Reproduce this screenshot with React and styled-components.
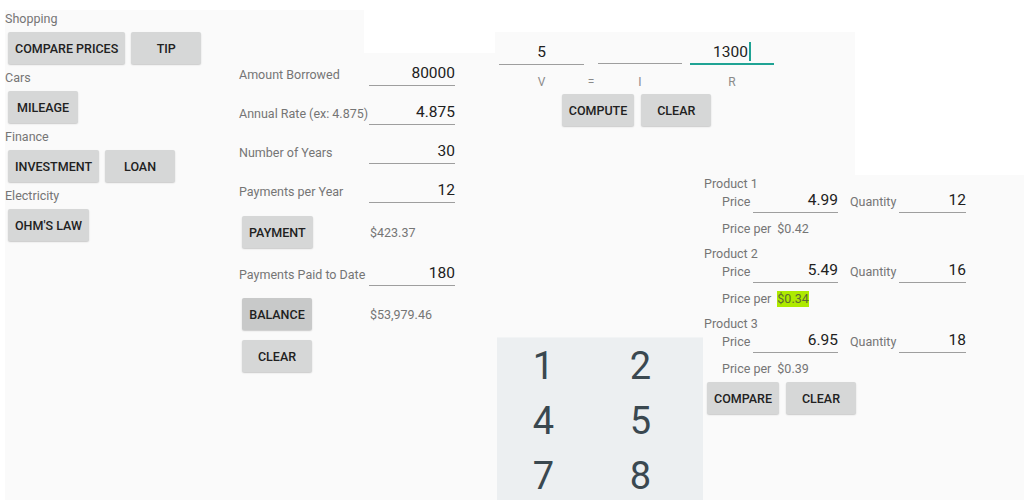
import React from "react";
import styled, { createGlobalStyle } from "styled-components";

const Global = createGlobalStyle`
  html, body { margin: 0; padding: 0; background: #ffffff; }
  body { font-family: Roboto, "Liberation Sans", sans-serif; }
  * { box-sizing: border-box; }
`;

const Desktop = styled.div`
  position: relative;
  width: 1024px;
  height: 500px;
  overflow: hidden;
  background: #ffffff;
`;

const Screen = styled.section`
  position: absolute;
  left: ${(p) => p.$x}px;
  top: ${(p) => p.$y}px;
  width: ${(p) => p.$w}px;
  height: ${(p) => p.$h}px;
  background: #fafafa;
  display: flex;
  flex-direction: column;
  padding: ${(p) => p.$pad || "0"};
`;

const Button = styled.button`
  justify-self: start;
  height: 32px;
  min-width: 70px;
  padding: 0 7px;
  margin: 0;
  border: none;
  border-radius: 2px;
  background: ${(p) => (p.$pressed ? "#c8c9c9" : "#d6d7d7")};
  box-shadow: 0 1px 1.5px rgba(0, 0, 0, 0.2);
  font-family: Roboto, "Liberation Sans", sans-serif;
  font-weight: 500;
  font-size: 12.5px;
  color: #212121;
  text-transform: uppercase;
  white-space: nowrap;
`;

/* ---------- Home menu ---------- */
const Menu = styled.div`
  display: flex;
  flex-direction: column;
  padding-top: 1px;
`;

const SectionLabel = styled.div`
  font-size: 12.5px;
  line-height: 16px;
  color: #757575;
`;

const ButtonRow = styled.div`
  display: flex;
  gap: ${(p) => p.$gap || 6}px;
  margin: ${(p) => p.$m || "0"};
  width: ${(p) => (p.$w ? `${p.$w}px` : "auto")};
  justify-content: ${(p) => p.$justify || "flex-start"};
`;

/* ---------- Loan ---------- */
const FormRow = styled.div`
  display: grid;
  grid-template-columns: 130px 86px;
  align-items: end;
  margin-top: ${(p) => p.$mt || 0}px;
`;

const FieldLabel = styled.span`
  font-size: 12.5px;
  line-height: 16px;
  color: #757575;
  padding-bottom: 3px;
  white-space: nowrap;
`;

const Field = styled.div`
  width: ${(p) => p.$w || 86}px;
  font-size: 15.5px;
  line-height: ${(p) => p.$lh || 20}px;
  padding-bottom: ${(p) => p.$pb || 2}px;
  color: #212121;
  text-align: ${(p) => p.$align || "right"};
  border-bottom: ${(p) => (p.$focused ? "2px solid #1fa394" : "1px solid #9e9e9e")};
  min-height: ${(p) => (p.$lh || 20) + (p.$pb || 2)}px;
  white-space: nowrap;
`;

const Cursor = styled.span`
  display: inline-block;
  width: 2px;
  height: 19px;
  margin-left: 1px;
  background: #1fa394;
  vertical-align: -4px;
`;

const ResultRow = styled.div`
  display: grid;
  grid-template-columns: 128px auto;
  align-items: center;
  margin-top: ${(p) => p.$mt || 0}px;
  padding-left: 3px;
`;

const ResultText = styled.span`
  font-size: 12.5px;
  color: #757575;
`;

const FormStack = styled.div`
  display: flex;
  flex-direction: column;
  gap: 16px;
`;

/* ---------- Ohm's law ---------- */
const OhmGrid = styled.div`
  display: grid;
  grid-template-columns: 85px 14px 84px 8px 84px;
  row-gap: 10px;
  align-items: start;
  width: 275px;
`;

const OhmLabel = styled.span`
  font-size: 12px;
  line-height: 14px;
  color: #8a8a8a;
  text-align: center;
`;

const Keypad = styled.div`
  margin-top: auto;
  margin-left: -2px;
  height: 163px;
  background: #eceff1;
  border-top: 1px solid #f2f4f5;
  display: grid;
  grid-template-columns: 93px 101px;
  grid-auto-rows: 55px;
  padding-top: 1px;
`;

const Key = styled.div`
  font-size: 38px;
  line-height: 55px;
  text-align: center;
  color: #3a4850;
`;

/* ---------- Compare prices ---------- */
const ProductLabel = styled.div`
  font-size: 12.5px;
  line-height: 14px;
  color: #757575;
  margin-top: ${(p) => p.$mt || 0}px;
`;

const PriceRow = styled.div`
  display: grid;
  grid-template-columns: 31px 85px 12px 49px 67px;
  align-items: end;
  padding-left: 18px;
`;

const SmallLabel = styled.span`
  font-size: 12.5px;
  line-height: 16px;
  color: #757575;
  padding-bottom: 3px;
  white-space: nowrap;
`;

const PerRow = styled.div`
  display: flex;
  gap: 6px;
  padding-left: 18px;
  margin-top: 8px;
  font-size: 12.5px;
  line-height: 16px;
  color: #757575;
`;

const PerValue = styled.span`
  background: ${(p) => (p.$best ? "#aeea00" : "transparent")};
  color: ${(p) => (p.$best ? "#5d6b33" : "#757575")};
`;

const menu = [
  { label: "Shopping", buttons: ["Compare Prices", "Tip"] },
  { label: "Cars", buttons: ["Mileage"] },
  { label: "Finance", buttons: ["Investment", "Loan"] },
  { label: "Electricity", buttons: ["Ohm's Law"] },
];

const loanRows = [
  ["Amount Borrowed", "80000"],
  ["Annual Rate (ex: 4.875)", "4.875"],
  ["Number of Years", "30"],
  ["Payments per Year", "12"],
];

const products = [
  { name: "Product 1", price: "4.99", qty: "12", per: "$0.42" },
  { name: "Product 2", price: "5.49", qty: "16", per: "$0.34", best: true },
  { name: "Product 3", price: "6.95", qty: "18", per: "$0.39" },
];

const keys = ["1", "2", "4", "5", "7", "8"];

export default function App() {
  return (
    <>
      <Global />
      <Desktop>
        {/* Home menu */}
        <Screen $x={5} $y={10} $w={359} $h={490}>
          <Menu>
            {menu.map((g) => (
              <div key={g.label}>
                <SectionLabel>{g.label}</SectionLabel>
                <ButtonRow $m="5px 0 6px 3px">
                  {g.buttons.map((b) => (
                    <Button key={b}>{b}</Button>
                  ))}
                </ButtonRow>
              </div>
            ))}
          </Menu>
        </Screen>

        {/* Loan */}
        <Screen $x={233} $y={53} $w={262} $h={447} $pad="10px 0 0 6px">
          <FormStack>
            {loanRows.map(([l, v]) => (
              <FormRow key={l}>
                <FieldLabel>{l}</FieldLabel>
                <Field>{v}</Field>
              </FormRow>
            ))}
          </FormStack>
          <ResultRow $mt={13}>
            <Button>Payment</Button>
            <ResultText>$423.37</ResultText>
          </ResultRow>
          <FormRow $mt={15}>
            <FieldLabel>Payments Paid to Date</FieldLabel>
            <Field>180</Field>
          </FormRow>
          <ResultRow $mt={12}>
            <Button $pressed>Balance</Button>
            <ResultText>$53,979.46</ResultText>
          </ResultRow>
          <ResultRow $mt={10}>
            <Button>Clear</Button>
          </ResultRow>
        </Screen>

        {/* Ohm's law */}
        <Screen $x={495} $y={32} $w={360} $h={468} $pad="10px 0 0 4px">
          <OhmGrid>
            <Field $w={85} $align="center">5</Field>
            <span />
            <Field $w={84} $align="center" />
            <span />
            <Field $w={84} $align="center" $focused $pb={1}>
              1300
              <Cursor />
            </Field>
            <OhmLabel>V</OhmLabel>
            <OhmLabel>=</OhmLabel>
            <OhmLabel>I</OhmLabel>
            <span />
            <OhmLabel>R</OhmLabel>
          </OhmGrid>
          <ButtonRow $gap={7} $m="5px 0 0 0" $justify="center" $w={275}>
            <Button>Compute</Button>
            <Button>Clear</Button>
          </ButtonRow>
          <Keypad>
            {keys.map((k) => (
              <Key key={k}>{k}</Key>
            ))}
          </Keypad>
        </Screen>

        {/* Compare prices */}
        <Screen $x={703} $y={175} $w={321} $h={325} $pad="2px 0 0 1px">
          {products.map((p, i) => (
            <div key={p.name}>
              <ProductLabel $mt={i === 0 ? 0 : 10}>{p.name}</ProductLabel>
              <PriceRow>
                <SmallLabel>Price</SmallLabel>
                <Field $w={85} $lh={18} $pb={3}>{p.price}</Field>
                <span />
                <SmallLabel>Quantity</SmallLabel>
                <Field $w={67} $lh={18} $pb={3}>{p.qty}</Field>
              </PriceRow>
              <PerRow>
                <span>Price per</span>
                <PerValue $best={p.best}>{p.per}</PerValue>
              </PerRow>
            </div>
          ))}
          <ButtonRow $gap={7} $m="5px 0 0 3px">
            <Button>Compare</Button>
            <Button>Clear</Button>
          </ButtonRow>
        </Screen>
      </Desktop>
    </>
  );
}
